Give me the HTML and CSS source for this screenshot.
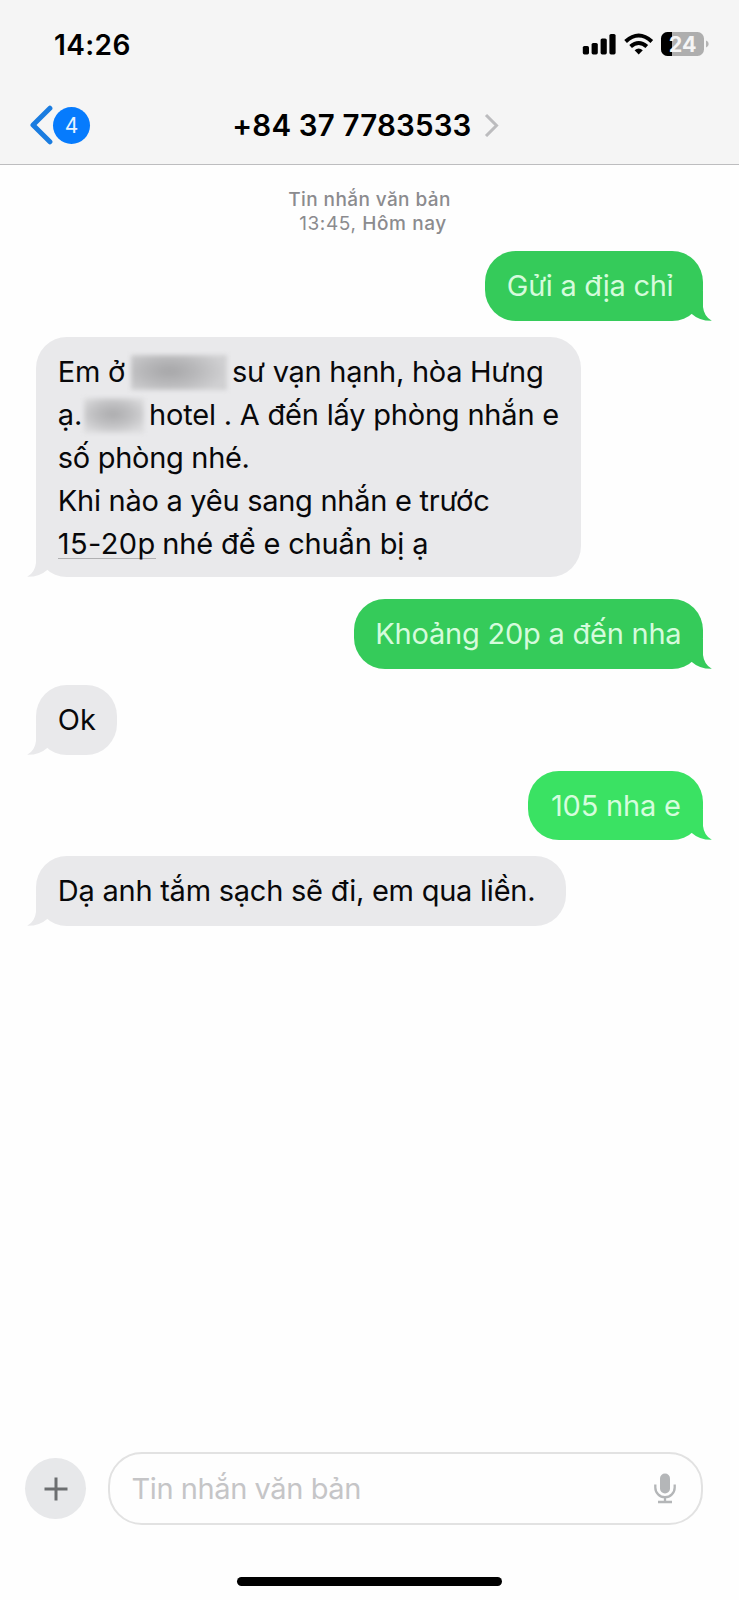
FILE: index.html
```html
<!DOCTYPE html>
<html lang="vi">
<head>
<meta charset="utf-8">
<title>+84 37 7783533</title>
<link rel="stylesheet" href="styles.css">
</head>
<body>
<header class="top">
  <div class="status">
    <span class="clock">14:26</span>
    <svg class="indicators" width="127" height="26" viewBox="0 0 127 26">
      <g fill="#000">
        <rect x=".8" y="14" width="6.2" height="8.4" rx="1.6"/>
        <rect x="9.6" y="11" width="6.2" height="11.4" rx="1.6"/>
        <rect x="18.6" y="6.4" width="6.2" height="16" rx="1.6"/>
        <rect x="27.4" y="2" width="6.2" height="20.4" rx="1.6"/>
      </g>
      <g fill="none" stroke="#000" stroke-width="4">
        <path d="M43.6 9.4Q56.7-2.4 69.8 9.4"/>
        <path d="M48.6 14.6Q56.7 7.4 64.8 14.6"/>
      </g>
      <path d="M52.6 18.3Q56.7 14.9 60.8 18.3L56.7 22.6Z"/>
      <rect x="79" y="0" width="43" height="24" rx="6.5" fill="#aeaeae"/>
      <path d="M90 0H85.5A6.5 6.5 0 0 0 79 6.5V17.5A6.5 6.5 0 0 0 85.5 24H90Z"/>
      <path d="M124 8.6Q126.7 9.5 126.7 12T124 15.4Z" fill="#b4b4b4"/>
      <text class="level" x="86.8" y="19.5">24</text>
    </svg>
  </div>
  <div class="nav">
    <div class="back">
      <svg width="24" height="40" viewBox="0 0 24 40"><path d="M20.9 3.2L4 20L20.9 36.8" fill="none" stroke="#1a7ce0" stroke-width="5" stroke-linecap="round" stroke-linejoin="round"/></svg>
      <span class="badge">4</span>
    </div>
    <div class="title"><span>+84 37 7783533</span>
      <svg width="15" height="24" viewBox="0 0 15 24"><path d="M2 2L12.5 12.5L2 23" fill="none" stroke="#bcbcbe" stroke-width="3"/></svg>
    </div>
  </div>
</header>
<main class="thread">
  <div class="stamp"><div class="service">Tin nhắn văn bản</div><div class="date"><span class="thin">13:45,</span> Hôm nay</div></div>
  <div class="bubble out w1">Gửi a địa chỉ<svg class="tail" width="25" height="30" viewBox="0 0 25 30"><path d="M0 0H16V16Q17 25.5 24.8 29.8Q12.5 30 4.500 22.700L0 20Z"/></svg></div>
  <div class="bubble in w2">
    <div class="line"><span>Em ở</span><span class="smudge street"></span><span>sư vạn hạnh, hòa Hưng</span></div>
    <div class="line l2"><span>ạ.</span><span class="smudge name"></span><span>hotel . A đến lấy phòng nhắn e</span></div>
    <div class="line l3">số phòng nhé.</div>
    <div class="line">Khi nào a yêu sang nhắn e trước</div>
    <div class="line l5"><span class="link">15-20p</span><span>nhé để e chuẩn bị ạ</span></div>
    <svg class="tail" width="25" height="30" viewBox="0 0 25 30"><path d="M25 0H9V16Q8 25.5 .2 29.8Q12.5 30 20.500 22.700L25 20Z"/></svg>
  </div>
  <div class="bubble out w3">Khoảng 20p a đến nha<svg class="tail" width="25" height="30" viewBox="0 0 25 30"><path d="M0 0H16V16Q17 25.5 24.8 29.8Q12.5 30 4.500 22.700L0 20Z"/></svg></div>
  <div class="bubble in w4">Ok<svg class="tail" width="25" height="30" viewBox="0 0 25 30"><path d="M25 0H9V16Q8 25.5 .2 29.8Q12.5 30 20.500 22.700L25 20Z"/></svg></div>
  <div class="bubble out bright w5">105 nha e<svg class="tail" width="25" height="30" viewBox="0 0 25 30"><path d="M0 0H16V16Q17 25.5 24.8 29.8Q12.5 30 4.500 22.700L0 20Z"/></svg></div>
  <div class="bubble in w6">Dạ anh tắm sạch sẽ đi, em qua liền.<svg class="tail" width="25" height="30" viewBox="0 0 25 30"><path d="M25 0H9V16Q8 25.5 .2 29.8Q12.5 30 20.500 22.700L25 20Z"/></svg></div>
</main>
<footer class="composer">
  <span class="plus"><svg width="24" height="24" viewBox="0 0 24 24"><path d="M12 .5V23.5M.5 12H23.5" stroke="#6c6e70" stroke-width="3" fill="none"/></svg></span>
  <div class="field"><span>Tin nhắn văn bản</span>
    <svg width="22" height="31" viewBox="0 0 22 31"><rect x="6" y=".5" width="10" height="20" rx="5" fill="#b4b6b8"/><path d="M1.3 11.5V14.5A9.7 9.7 0 0 0 20.7 14.5V11.5M11 24.5V29M4 29H18" fill="none" stroke="#b4b6b8" stroke-width="2.3"/></svg>
  </div>
</footer>
<div class="home"></div>
</body>
</html>
```
FILE: styles.css
```css
* { box-sizing: border-box; }
body {
  margin: 0; width: 739px; height: 1600px; background: #fefefe; color: #08080a;
  font-family: Inter, "Liberation Sans", sans-serif; overflow: hidden;
  display: flex; flex-direction: column;
}
svg { display: block; flex: none; }
.top { height: 165px; background: #f5f5f5; border-bottom: 1px solid #bdbdbf; flex: none; color: #000; }
.status { height: 86px; padding: 32px 30px 0 54px; display: flex; justify-content: space-between; }
.clock { font-size: 28px; font-weight: 600; line-height: 26px; letter-spacing: .4px; }
.level { font: 700 21.5px Inter, sans-serif; fill: #f5f5f5; }
.nav { height: 79px; padding: 0 240.5px 1px 29px; display: flex; align-items: center; justify-content: space-between; }
.back { display: flex; align-items: center; }
.badge { width: 37px; height: 37px; border-radius: 50%; background: #067bfd; color: #e8f3ff; font-size: 21px; line-height: 37px; text-align: center; }
.title { display: flex; align-items: center; gap: 12px; font-size: 29.5px; font-weight: 600; line-height: 36px; letter-spacing: .16px; padding-bottom: 1px; }
.thread { flex: 1; padding: 23px 36px 0; display: flex; flex-direction: column; align-items: flex-start; }
.stamp { align-self: center; height: 63px; text-align: center; color: #8b8b8e; font-size: 19px; font-weight: 500; line-height: 23.5px; letter-spacing: .4px; }
.date { letter-spacing: .6px; padding-left: 7px; }
.thin { font-weight: 400; }
.bubble { position: relative; height: 69.5px; border-radius: 31px; padding: 13px 0 0 21.8px; font-size: 29px; line-height: 43px; letter-spacing: -.27px; white-space: nowrap; flex: none; }
.in { background: #e9e9eb; }
.in .tail { fill: #e9e9eb; left: -9px; }
.out { background: #35cb5a; color: #d5fbdc; align-self: flex-end; }
.out .tail { fill: #35cb5a; right: -9px; }
.bright { background: #3ae263; color: #d5fddd; }
.bright .tail { fill: #3ae263; }
.tail { position: absolute; bottom: 0; }
.w1 { width: 218px; margin-bottom: 16.5px; letter-spacing: -.28px; }
.w2 { width: 545px; height: 240px; margin-bottom: 22px; }
.w3 { width: 349.5px; margin-bottom: 16.5px; letter-spacing: -.22px; }
.w4 { width: 80.5px; margin-bottom: 16px; letter-spacing: 0; }
.w5 { width: 175.5px; margin-bottom: 16px; padding-left: 23.5px; letter-spacing: -.2px; }
.w6 { width: 529.5px; letter-spacing: -.24px; }
.line { display: flex; }
.l2 { letter-spacing: -.2px; }
.l3 { letter-spacing: -.3px; }
.smudge { height: 35px; filter: blur(2px); flex: none; }
.street { width: 96px; margin: 5px 5px 0 6px; background: radial-gradient(ellipse 62% 75% at 40% 46%, #aaaaac 10%, #b8b8ba 45%, #d0d0d2 95%); }
.name { width: 60px; margin: 5px 5px 0 2px; background: radial-gradient(ellipse 65% 60% at 48% 46%, #b0b0b2 10%, #c0c0c2 50%, #dcdcde 100%); }
.link { letter-spacing: .4px; height: 36.5px; width: 98.5px; margin-right: 6px; border-bottom: 1.5px solid #b0b0b2; }
.l5 { letter-spacing: -.15px; }
.composer { height: 73px; margin-bottom: 52px; padding: 0 36px 0 25px; display: flex; align-items: center; gap: 21.5px; flex: none; }
.plus { width: 61px; height: 61px; border-radius: 50%; background: #e7e8ea; display: flex; align-items: center; justify-content: center; }
.field { flex: 1; height: 73px; border: 2px solid #e2e2e2; border-radius: 34px; padding: 0 25px 0 22px; display: flex; align-items: center; justify-content: space-between; font-size: 29px; letter-spacing: -.42px; color: #c5c5c7; }
.home { width: 265px; height: 9px; border-radius: 5px; background: #000; margin: 0 auto 14px; flex: none; }
```
